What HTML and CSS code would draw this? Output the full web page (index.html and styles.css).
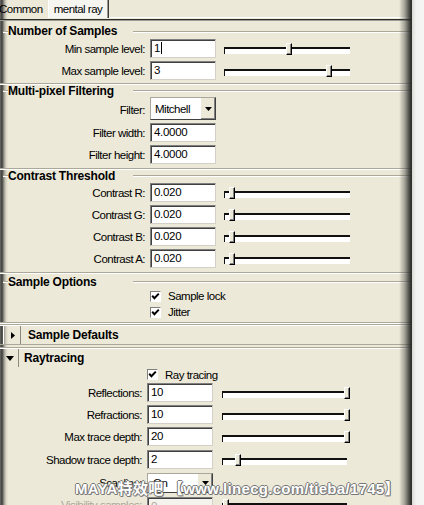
FILE: index.html
```html
<!DOCTYPE html>
<html>
<head>
<meta charset="utf-8">
<link rel="stylesheet" href="styles.css">
</head>
<body>
<div class="app">
  <div class="main">
    <div class="tabs">
      <div class="tab">Common</div>
      <div class="tab active">mental ray</div>
      <div class="tab-fill"></div>
    </div>

    <section class="frame f1">
      <div class="frame-title"><span>Number of Samples</span></div>
      <div class="row">
        <span class="lbl">Min sample level:</span>
        <span class="field">1<i class="caret"></i></span>
        <span class="slider"><i class="thumb" style="left:63px"></i></span>
      </div>
      <div class="row">
        <span class="lbl">Max sample level:</span>
        <span class="field">3</span>
        <span class="slider"><i class="thumb" style="left:103px"></i></span>
      </div>
    </section>

    <section class="frame f2">
      <div class="frame-title"><span>Multi-pixel Filtering</span></div>
      <div class="row row-tall">
        <span class="lbl">Filter:</span>
        <span class="dropdown"><span class="dd-text">Mitchell</span><span class="dd-btn"><svg width="7" height="4" viewBox="0 0 7 4"><polygon points="0,0 7,0 3.5,4" fill="#000"/></svg></span></span>
      </div>
      <div class="row">
        <span class="lbl">Filter width:</span>
        <span class="field">4.0000</span>
      </div>
      <div class="row">
        <span class="lbl">Filter height:</span>
        <span class="field">4.0000</span>
      </div>
    </section>

    <section class="frame f3">
      <div class="frame-title"><span>Contrast Threshold</span></div>
      <div class="row">
        <span class="lbl">Contrast R:</span>
        <span class="field">0.020</span>
        <span class="slider"><i class="thumb" style="left:6px"></i></span>
      </div>
      <div class="row">
        <span class="lbl">Contrast G:</span>
        <span class="field">0.020</span>
        <span class="slider"><i class="thumb" style="left:6px"></i></span>
      </div>
      <div class="row">
        <span class="lbl">Contrast B:</span>
        <span class="field">0.020</span>
        <span class="slider"><i class="thumb" style="left:6px"></i></span>
      </div>
      <div class="row">
        <span class="lbl">Contrast A:</span>
        <span class="field">0.020</span>
        <span class="slider"><i class="thumb" style="left:6px"></i></span>
      </div>
    </section>

    <section class="frame f4">
      <div class="frame-title"><span>Sample Options</span></div>
      <div class="check-row">
        <span class="check"><span class="box"><svg width="9" height="9" viewBox="0 0 9 9"><path d="M1.2 3.8 L3.4 6.2 L7.8 1.6" fill="none" stroke="#000" stroke-width="2"/></svg></span>Sample lock</span>
      </div>
      <div class="check-row">
        <span class="check"><span class="box"><svg width="9" height="9" viewBox="0 0 9 9"><path d="M1.2 3.8 L3.4 6.2 L7.8 1.6" fill="none" stroke="#000" stroke-width="2"/></svg></span>Jitter</span>
      </div>
    </section>

    <div class="fl-head collapsed">
      <span class="fl-btn"><svg width="4" height="7" viewBox="0 0 4 7"><polygon points="0,0 4,3.5 0,7" fill="#000"/></svg></span>
      <span class="fl-label">Sample Defaults</span>
    </div>

    <div class="fl-head expanded">
      <span class="fl-btn"><svg width="8" height="5" viewBox="0 0 8 5"><polygon points="0,0 8,0 4,5" fill="#000"/></svg></span>
      <span class="fl-label">Raytracing</span>
    </div>

    <div class="rt">
      <div class="check-row rt-check">
        <span class="check"><span class="box"><svg width="9" height="9" viewBox="0 0 9 9"><path d="M1.2 3.8 L3.4 6.2 L7.8 1.6" fill="none" stroke="#000" stroke-width="2"/></svg></span>Ray tracing</span>
      </div>
      <div class="row">
        <span class="lbl">Reflections:</span>
        <span class="field">10</span>
        <span class="slider"><i class="thumb" style="left:123px"></i></span>
      </div>
      <div class="row">
        <span class="lbl">Refractions:</span>
        <span class="field">10</span>
        <span class="slider"><i class="thumb" style="left:123px"></i></span>
      </div>
      <div class="row">
        <span class="lbl">Max trace depth:</span>
        <span class="field">20</span>
        <span class="slider"><i class="thumb" style="left:123px"></i></span>
      </div>
      <div class="row row-23">
        <span class="lbl">Shadow trace depth:</span>
        <span class="field">2</span>
        <span class="slider"><i class="thumb" style="left:14px"></i></span>
      </div>
      <div class="row row-23">
        <span class="lbl">Scanline:</span>
        <span class="dropdown dd-small"><span class="dd-text">On</span><span class="dd-btn"><svg width="7" height="4" viewBox="0 0 7 4"><polygon points="0,0 7,0 3.5,4" fill="#000"/></svg></span></span>
      </div>
      <div class="row disabled">
        <span class="lbl">Visibility samples:</span>
        <span class="field">0</span>
        <span class="slider"><i class="thumb" style="left:2px"></i></span>
      </div>
    </div>
  </div>
  <div class="side"></div>
</div>
<div class="watermark">MAYA特效吧 【www.linecg.com/tieba/1745】</div>
</body>
</html>
```

FILE: styles.css
```css
* { box-sizing: border-box; }
html, body { margin: 0; padding: 0; }
body {
  width: 424px;
  height: 505px;
  overflow: hidden;
  position: relative;
  background: #ece9d8;
  font-family: "Liberation Sans", Arial, sans-serif;
  font-size: 11.5px;
  letter-spacing: -0.5px;
  color: #000;
}
.app { display: flex; height: 505px; }
.main {
  position: relative;
  width: 412px;
  height: 505px;
  overflow: hidden;
  background: linear-gradient(to right, #6a6a66 0, #3e3e3c 2px, #9c9a90 4px, #d6d3c3 6px, #ece9d8 8px);
}
.main::after {
  content: "";
  position: absolute;
  top: 0; right: 0; bottom: 0;
  width: 13px;
  background: linear-gradient(to right, rgba(70,70,66,0) 0, rgba(70,70,66,0.45) 45%, rgba(40,40,38,0.9) 85%, #2a2a28 100%);
}
.side { width: 12px; background: linear-gradient(to right, #d9d9d6 0, #f3f3f1 4px, #f6f6f4 100%); }

/* tabs */
.tabs {
  display: flex;
  align-items: flex-start;
  height: 20px;
  border-bottom: 1px solid #2e2e2c;
  box-shadow: 0 1px 0 #9d9b90;
  margin-bottom: 1px;
}
.tab { height: 18px; line-height: 18px; padding: 0 3px 0 0; margin-left: -1px; }
.tab.active {
  margin-left: 2px;
  padding: 0 6px 0 5px;
  background: #f6f5f0;
  border-left: 1px solid #fff;
  border-right: 1px solid #3c3c3a;
  box-shadow: inset -1px 0 0 #9a988c;
}
.tab-fill { flex: 1; height: 18px; border-bottom: 1px solid #fff; }

/* frames */
.frame {
  border-bottom: 1px solid #aca899;
  box-shadow: 0 1px 0 #fff;
  margin-bottom: 1px;
}
.f1 { padding: 4px 0 1px; }
.f2 { padding: 0 0 2px; }
.f3 { padding: 0 0 2px; }
.f4 { padding: 2px 0 2px; }
.frame-title {
  display: flex;
  align-items: center;
  height: 12px;
  line-height: 12px;
  font-size: 12px;
  font-weight: bold;
  letter-spacing: -0.2px;
}
.f1 .frame-title { height: 13px; line-height: 13px; }
.frame-title::before {
  content: "";
  width: 5px;
  margin-left: 3px;
  border-top: 1px solid #aca899;
  border-bottom: 1px solid #fff;
}
.frame-title span { width: 125px; white-space: nowrap; }
.frame-title::after {
  content: "";
  flex: 1;
  border-top: 1px solid #aca899;
  border-bottom: 1px solid #fff;
}

/* rows */
.row {
  display: grid;
  grid-template-columns: 145px 66px 129px;
  column-gap: 5px;
  height: 22px;
  align-items: center;
}
.row-tall { height: 25px; }
.row-23 { height: 23px; }
.lbl { text-align: right; white-space: nowrap; }
.field {
  align-self: start;
  margin-top: 1px;
  height: 19px;
  background: #fff;
  border: 1px solid;
  border-color: #808080 #d4d0c8 #d4d0c8 #808080;
  box-shadow: inset 1px 1px 0 #404040;
  padding-left: 3px;
  line-height: 17px;
  letter-spacing: -0.3px;
  white-space: nowrap;
}
.row-23 .field { margin-top: 2px; }
.caret {
  display: inline-block;
  width: 1px;
  height: 12px;
  background: #000;
  vertical-align: -2px;
  margin-left: 1px;
}

/* slider */
.slider {
  position: relative;
  height: 12px;
  margin-left: 2px;
}
.slider::before {
  content: "";
  position: absolute;
  left: 1px; right: 0;
  top: 4px;
  height: 5px;
  border-top: 2px solid #111;
  border-left: 1px solid #111;
  background: #fff;
}
.thumb {
  position: absolute;
  top: 0;
  width: 6px;
  height: 12px;
  background: #ece9d8;
  border-top: 1px solid #fff;
  border-left: 1px solid #fff;
  border-right: 1px solid #000;
  border-bottom: 1px solid #000;
  box-shadow: inset -1px -1px 0 #808080;
}

/* dropdown */
.dropdown {
  align-self: start;
  display: flex;
  height: 23px;
  background: #fff;
  border: 1px solid;
  border-color: #a9a79c #404040 #404040 #a9a79c;
}
.dd-small { height: 20px; margin-top: 2px; }
.dd-text { flex: 1; padding-left: 4px; display: flex; align-items: center; }
.dd-small .dd-text { padding-left: 5px; }
.dd-btn {
  width: 15px;
  background: #ece9d8;
  border-left: 1px solid #fff;
  box-shadow: inset -1px -1px 0 #808080;
  display: flex;
  align-items: center;
  justify-content: center;
}

/* checkboxes */
.check-row {
  display: flex;
  align-items: center;
  height: 16px;
  padding-left: 150px;
}
.check { display: flex; align-items: center; gap: 7px; }
.box {
  width: 11px;
  height: 11px;
  background: #fff;
  border: 1px solid;
  border-color: #808080 #fff #fff #808080;
  display: flex;
  align-items: center;
  justify-content: center;
}

/* collapsible headers */
.fl-head {
  display: flex;
  align-items: center;
  height: 21px;
  border-top: 1px solid #aca899;
  box-shadow: inset 0 1px 0 #fff;
  font-size: 12px;
  font-weight: bold;
  letter-spacing: -0.2px;
}
.fl-head.collapsed {
  border-bottom: 1px solid #aca899;
  margin-bottom: 2px;
}
.fl-head.expanded { height: 20px; }
.fl-btn {
  align-self: stretch;
  width: 18px;
  margin: 1px 0 0 3px;
  border-right: 1px solid #8c8a80;
  display: flex;
  align-items: center;
  justify-content: center;
}
.collapsed .fl-btn { padding-left: 2px; border-left: 1px solid #fff; }
.expanded .fl-btn { margin-left: 1px; }
.collapsed .fl-label { margin-left: 7px; }
.expanded .fl-label { margin-left: 5px; }

/* raytracing */
.rt .row { grid-template-columns: 142px 66px 129px; }
.rt .slider { margin-left: 3px; }
.rt-check { height: 15px; padding-left: 147px; }
.disabled .lbl { color: #aca899; }
.disabled .field { background: #f4f3ee; color: #aca899; margin-top: 3px; }

/* watermark overlay */
.watermark {
  position: absolute;
  left: 75px;
  top: 480px;
  font-family: "Liberation Sans", "Noto Sans CJK SC", sans-serif;
  font-size: 15px;
  font-weight: bold;
  letter-spacing: 0.3px;
  line-height: 17px;
  color: #fff;
  white-space: nowrap;
  text-shadow: 1px 0 0 #777, -1px 0 0 #777, 0 1px 0 #777, 0 -1px 0 #777, 1px 1px 0 #888;
}
```
